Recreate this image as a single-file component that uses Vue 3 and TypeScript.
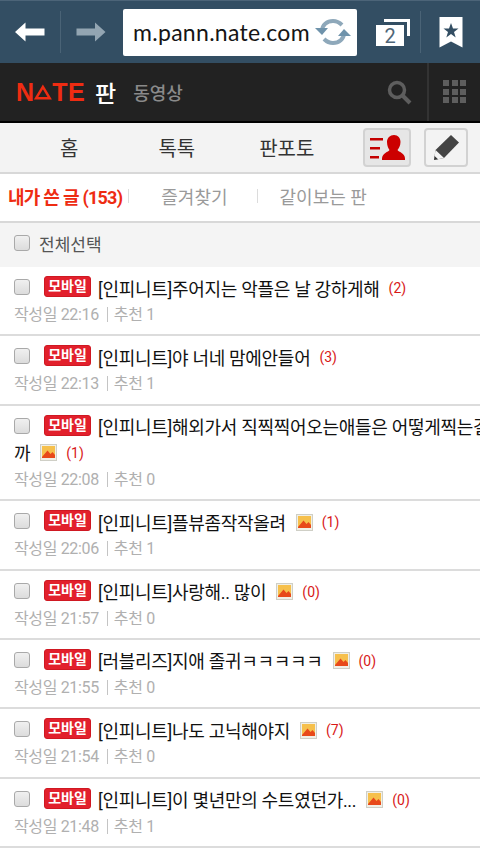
<script setup lang="ts">
interface Post {
  title: string
  wrap?: string
  hasImage: boolean
  comments: number
  time: string
  votes: number
}

const posts: Post[] = [
  { title: '[인피니트]주어지는 악플은 날 강하게해', hasImage: false, comments: 2, time: '22:16', votes: 1 },
  { title: '[인피니트]야 너네 맘에안들어', hasImage: false, comments: 3, time: '22:13', votes: 1 },
  { title: '[인피니트]해외가서 직찍찍어오는애들은 어떻게찍는걸', wrap: '까', hasImage: true, comments: 1, time: '22:08', votes: 0 },
  { title: '[인피니트]플뷰좀작작올려', hasImage: true, comments: 1, time: '22:06', votes: 1 },
  { title: '[인피니트]사랑해.. 많이', hasImage: true, comments: 0, time: '21:57', votes: 0 },
  { title: '[러블리즈]지애 졸귀ㅋㅋㅋㅋㅋ', hasImage: true, comments: 0, time: '21:55', votes: 0 },
  { title: '[인피니트]나도 고닉해야지', hasImage: true, comments: 7, time: '21:54', votes: 0 },
  { title: '[인피니트]이 몇년만의 수트였던가...', hasImage: true, comments: 0, time: '21:48', votes: 1 },
]
</script>

<template>
  <div class="page">
    <header class="browser">
      <button class="nav-btn">
        <svg width="30" height="20" viewBox="0 0 30 20"><path d="M0 10 10.500 0.500V6.500H29.500V13.500H10.500V19.500Z" fill="#fff" /></svg>
      </button>
      <span class="divider"></span>
      <button class="nav-btn">
        <svg width="30" height="20" viewBox="0 0 30 20"><path d="M29.500 10 19 0.500V6.500H0.500V13.500H19V19.500Z" fill="#93a5b2" /></svg>
      </button>
      <div class="url">
        <span class="url-text">m.pann.nate.com</span>
        <svg class="reload" width="36" height="28" viewBox="0 0 36 28" fill="none">
          <path d="M7 13C7 7 12 3 18 3c4 0 7 2 9 4" stroke="#8ea8ba" stroke-width="4" />
          <path d="M0 10 7 17 13 10Z" fill="#6f93ab" />
          <path d="M29 15c0 6-5 10-11 10-4 0-7-2-9-4" stroke="#8ea8ba" stroke-width="4" />
          <path d="M23 18 29 11 36 18Z" fill="#6f93ab" />
        </svg>
      </div>
      <div class="tabs-btn">
        <span class="tab-back"></span>
        <span class="tab-front">2</span>
      </div>
      <span class="divider divider-right"></span>
      <svg class="bookmark" width="24" height="31" viewBox="0 0 24 31">
        <path d="M0.500 0H23.500V30.500L12 24.500 0.500 30.500Z" fill="#fff" />
        <path d="M12 6 14 11.500H19.500L15 15 16.700 20.500 12 17 7.300 20.500 9 15 4.500 11.500H10Z" fill="#334e63" />
      </svg>
    </header>

    <div class="brand-bar">
      <div class="brand">
        <span class="nate">N<svg class="delta" width="21" height="18" viewBox="0 0 21 18" fill="none"><path d="M10.500 3 18.500 16.300H2.500Z" stroke="#ee2c12" stroke-width="3" /></svg>TE</span>
        <span class="pan">판</span>
        <span class="section">동영상</span>
      </div>
      <svg class="search" width="25" height="25" viewBox="0 0 25 25" fill="none">
        <circle cx="10" cy="10" r="7.500" stroke="#5e5e5e" stroke-width="3.500" />
        <path d="M15 15 23 23" stroke="#5e5e5e" stroke-width="4" />
      </svg>
      <div class="grid-btn">
        <span v-for="n in 9" :key="n" class="dot"></span>
      </div>
    </div>

    <nav class="menu">
      <a class="menu-item home">홈</a>
      <a class="menu-item talk">톡톡</a>
      <a class="menu-item fan">판포토</a>
      <button class="tool tool-on">
        <svg width="35" height="26" viewBox="0 0 35 26">
          <path d="M0 3H13V5.500H0ZM0 12H10V14.500H0ZM0 21H9V23.500H0Z" fill="#c40000" />
          <path d="M24 0c4 0 6.500 3 6.500 7 0 4-2 6.500-3 8 1 2 7.500 3 7.500 8.500V25H12v-1.500c0-5.500 6.500-6.500 7.500-8.500-1-1.500-2.500-4-2.500-8 0-4 3-7 7-7Z" fill="#cc0000" />
        </svg>
      </button>
      <button class="tool">
        <svg width="27" height="27" viewBox="0 0 27 27">
          <path d="M18 1 26 8.500 11 24 1 26 2.500 16Z" fill="#444" />
          <path d="M2.500 16 11 24 1 26Z" fill="#f4f4f4" />
          <path d="M1.600 22 5 25.300 1 26Z" fill="#333" />
        </svg>
      </button>
    </nav>

    <div class="tabs">
      <a class="tab tab-active">내가 쓴 글 (153)</a>
      <span class="tab-sep"></span>
      <a class="tab tab-fav">즐겨찾기</a>
      <span class="tab-sep"></span>
      <a class="tab tab-share">같이보는 판</a>
    </div>

    <div class="select-all">
      <span class="check"></span>
      <span>전체선택</span>
    </div>

    <ul class="list">
      <li v-for="post in posts" :key="post.time" class="post">
        <div class="title">
          <span class="check"></span>
          <span class="badge">모바일</span>
          <span class="title-text">{{ post.title }}</span>
          <template v-if="!post.wrap">
            <svg v-if="post.hasImage" class="pic" width="17" height="17" viewBox="0 0 17 17">
              <rect x="0.500" y="0.500" width="16" height="16" fill="#f1efe6" stroke="#cfcfc6" />
              <rect x="2" y="2" width="13" height="12" fill="#f6c04c" />
              <path d="M2 13 7.500 6.500 10.500 10 12.500 8 15 11V14H2Z" fill="#e8491a" />
            </svg>
            <span class="count">({{ post.comments }})</span>
          </template>
        </div>
        <div v-if="post.wrap" class="title">
          <span class="title-text">{{ post.wrap }}</span>
          <svg v-if="post.hasImage" class="pic" width="17" height="17" viewBox="0 0 17 17">
            <rect x="0.500" y="0.500" width="16" height="16" fill="#f1efe6" stroke="#cfcfc6" />
            <rect x="2" y="2" width="13" height="12" fill="#f6c04c" />
            <path d="M2 13 7.500 6.500 10.500 10 12.500 8 15 11V14H2Z" fill="#e8491a" />
          </svg>
          <span class="count">({{ post.comments }})</span>
        </div>
        <div class="meta">작성일 {{ post.time }}<i class="bar"></i>추천 {{ post.votes }}</div>
      </li>
    </ul>
  </div>
</template>

<style>
html,
body {
  margin: 0;
  background: #fff;
  overflow: hidden;
}
</style>

<style scoped>
.page {
  width: 480px;
  height: 853px;
  overflow: hidden;
  font-family: "Roboto", "Noto Sans CJK KR", sans-serif;
  background: #fff;
}

.browser {
  height: 63px;
  box-sizing: border-box;
  border-top: 1px solid #4c6478;
  background: #334e63;
  display: flex;
  align-items: center;
  padding-left: 15px;
}

.nav-btn {
  width: 30px;
  height: 20px;
  padding: 0;
  border: 0;
  background: none;
  display: flex;
}

.divider {
  width: 1px;
  height: 42px;
  margin: 0 15px;
  background: #4a6376;
}

.url {
  width: 234px;
  height: 47px;
  box-sizing: border-box;
  margin-left: 17px;
  padding-left: 10px;
  border-radius: 2px;
  background: #fff;
  display: flex;
  align-items: center;
  position: relative;
  overflow: hidden;
}

.url-text {
  font-family: "Lato", sans-serif;
  font-size: 23px;
  letter-spacing: 0.3px;
  color: #151515;
  white-space: nowrap;
}

.reload {
  position: absolute;
  right: 6px;
  top: 9px;
  background: #fff;
  box-shadow: -3px 0 2px #fff;
}

.tabs-btn {
  width: 34px;
  height: 27px;
  margin-left: 19px;
  position: relative;
}

.tab-back {
  position: absolute;
  top: 0;
  right: 0;
  width: 26px;
  height: 17px;
  box-sizing: border-box;
  border-top: 3px solid #fff;
  border-right: 3px solid #fff;
}

.tab-front {
  position: absolute;
  left: 0;
  bottom: 0;
  width: 28px;
  height: 21px;
  background: #fff;
  color: #4f6678;
  font-size: 20px;
  line-height: 22px;
  text-align: center;
}

.divider-right {
  margin: 0 18px 0 10px;
}

.bookmark {
  flex: none;
}

.brand-bar {
  height: 58px;
  background: #222;
  border-bottom: 2px solid #000;
  display: flex;
  align-items: center;
}

.brand {
  flex: 1;
  display: flex;
  align-items: center;
  padding-left: 16px;
}

.nate {
  font-family: "Liberation Sans", sans-serif;
  font-size: 25px;
  font-weight: 700;
  letter-spacing: 0.4px;
  color: #ee2c12;
  display: flex;
  align-items: center;
  width: 69px;
}

.delta {
  margin: 0;
}

.pan {
  margin-left: 10px;
  font-size: 23px;
  font-weight: 500;
  color: #fff;
}

.section {
  margin-left: 17px;
  font-size: 18px;
  font-weight: 500;
  color: #8a8a8a;
}

.search {
  margin-right: 15px;
}

.grid-btn {
  width: 53px;
  height: 58px;
  box-sizing: border-box;
  border-left: 2px solid #333;
  padding: 17px 0 0 14px;
  display: grid;
  grid-template-columns: repeat(3, 6px);
  grid-auto-rows: 6px;
  gap: 2.500px;
}

.dot {
  background: #5e5e5e;
}

.menu {
  height: 51px;
  box-sizing: border-box;
  background: #f3f3f3;
  border-bottom: 2px solid #d8d8d8;
  display: flex;
  align-items: center;
  color: #333;
  font-size: 20px;
}

.menu-item {
  color: #333;
}

.home {
  margin-left: 60px;
}

.talk {
  margin-left: 80px;
}

.fan {
  margin-left: 64px;
}

.tool {
  width: 44px;
  height: 39px;
  padding: 0;
  margin-left: 49px;
  box-sizing: border-box;
  border: 2px solid #d2d2d2;
  border-radius: 4px;
  background: #f3f3f3;
  display: flex;
  align-items: center;
  justify-content: center;
}

.tool-on {
  width: 48px;
  background: #e6e6e6;
}

.tool + .tool {
  margin-left: 13px;
}

.tabs {
  height: 49px;
  box-sizing: border-box;
  padding-bottom: 3px;
  background: #fff;
  border-bottom: 2px solid #d8d8d8;
  display: flex;
  align-items: center;
  font-size: 18px;
  color: #9a9a9a;
}

.tab {
  white-space: nowrap;
}

.tab-active {
  margin-left: 8px;
  color: #ee2c12;
  font-weight: 700;
  letter-spacing: -0.75px;
}

.tab-fav {
  margin-left: 32px;
}

.tab-share {
  margin-left: 22px;
}

.tab-sep {
  width: 1px;
  height: 14px;
  margin-left: 6px;
  background: #dcdcdc;
}

.tab-sep ~ .tab-sep {
  margin-left: 29px;
}

.select-all {
  height: 44px;
  box-sizing: border-box;
  padding: 0 0 4px 14px;
  background: #f4f4f4;
  display: flex;
  align-items: center;
  gap: 9px;
  font-size: 17px;
  color: #555;
}

.check {
  display: inline-block;
  flex: none;
  width: 16px;
  height: 16px;
  box-sizing: border-box;
  border: 1.500px solid #a9a9a9;
  border-radius: 3px;
  background: linear-gradient(#f0f0f0, #dcdcdc);
}

.list {
  margin: 0;
  padding: 0;
  list-style: none;
}

.post {
  padding: 8px 0 7.400px 14px;
  border-bottom: 2px solid #dcdcdc;
}

.title {
  height: 26px;
  display: flex;
  align-items: center;
  font-size: 18px;
  letter-spacing: -0.3px;
  color: #111;
  white-space: nowrap;
}

.title .check {
  margin-bottom: 2px;
}

.badge {
  flex: none;
  box-sizing: border-box;
  width: 47px;
  height: 21px;
  margin: 0 7px 3px 14px;
  border: 1px solid #cf1822;
  border-radius: 3px;
  background: #e2202c;
  color: #fff;
  font-size: 14px;
  font-weight: 700;
  line-height: 19px;
  letter-spacing: 0;
  text-align: center;
}

.title-text {
  flex: none;
  margin-bottom: 1px;
}

.pic {
  flex: none;
  margin-left: 10px;
}

.count {
  margin-left: 9px;
  font-size: 14px;
  letter-spacing: 0;
  color: #d81818;
}

.meta {
  margin-top: 2px;
  height: 24px;
  font-size: 16px;
  line-height: 24px;
  letter-spacing: -0.35px;
  color: #b0b0b0;
  white-space: nowrap;
}

.bar {
  display: inline-block;
  width: 1px;
  height: 15px;
  margin: 0 6px 0 8px;
  background: #c4c4c4;
  vertical-align: -2px;
}
</style>
